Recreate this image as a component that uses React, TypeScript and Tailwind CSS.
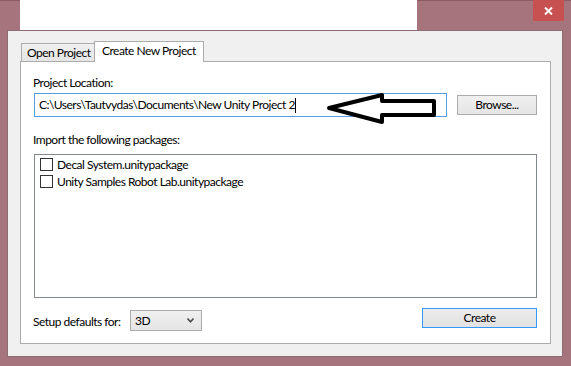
export default function App() {
  return (
    <div className="w-[571px] h-[366px] bg-[#a6747c] flex flex-col overflow-hidden whitespace-nowrap font-['Segoe_UI','Lato',sans-serif] text-[12px] tracking-[-0.5px] text-black">
      {/* Title bar */}
      <div className="h-[30px] shrink-0 flex">
        <div className="w-[20px] border-t border-[#8a5c65]" />
        <div className="w-[397px] bg-white" />
        <div className="flex-1 border-t border-[#8a5c65]" />
        <div className="w-[31px] h-[21px] bg-[#c75050] flex items-center justify-center">
          <svg width="9" height="8" viewBox="0 0 9 8">
            <path d="M1 0.5 L8 7.5 M8 0.5 L1 7.5" stroke="white" strokeWidth="2" />
          </svg>
        </div>
        <div className="w-[7px] border-t border-[#8a5c65]" />
      </div>

      {/* Client area */}
      <div className="ml-[7px] mr-[8px] mb-[9px] flex-1 bg-[#f0f0f0] border border-[#8c6b72] pl-[12px] pr-[11px] pt-[10px] pb-[12px] flex flex-col">
        {/* Tabs */}
        <div className="h-[20px] flex items-end shrink-0">
          <div className="ml-[1px] w-[74px] h-[18px] border border-b-0 border-[#acacac] bg-gradient-to-b from-[#f0f0f0] to-[#e5e5e5] pl-[5px] leading-[17px]">
            Open Project
          </div>
          <div className="relative z-10 -mb-[1px] ml-[-1px] w-[110px] h-[21px] border border-b-0 border-[#acacac] bg-white pl-[7px] leading-[18px] self-start">
            Create New Project
          </div>
        </div>

        {/* Tab panel */}
        <div className="flex-1 border border-[#acacac] bg-white pl-[12px] pr-[13px] flex flex-col">
          <div className="mt-[13px] leading-[16px]">Project Location:</div>

          <div className="mt-[2px] h-[24px] flex items-center">
            <div className="relative ml-[1px] w-[413px] h-[24px] border border-[#569de5] bg-white flex items-center pl-[4px]">
              <span className="leading-[16px]">C:\Users\Tautvydas\Documents\New Unity Project 2</span>
              <span className="w-px h-[15px] bg-black" />
              <svg
                className="absolute left-[292px] top-[-2px] overflow-visible"
                width="112"
                height="32"
                viewBox="0 0 112 32"
              >
                <path
                  d="M2 16 L55 3 L55 9 L107 9 L107 23 L55 23 L55 30 Z"
                  fill="white"
                  stroke="black"
                  strokeWidth="4"
                  strokeLinejoin="round"
                />
              </svg>
            </div>
            <button className="ml-[10px] w-[80px] h-[20px] border border-[#acacac] bg-gradient-to-b from-[#f0f0f0] to-[#e5e5e5] leading-[16px]">
              Browse...
            </button>
          </div>

          <div className="mt-[15px] leading-[16px]">Import the following packages:</div>

          <div className="mt-[6px] ml-[1px] w-[503px] h-[144px] border border-[#828790] bg-white pt-[1px] pl-[5px] flex flex-col">
            {["Decal System.unitypackage", "Unity Samples Robot Lab.unitypackage"].map((name) => (
              <div key={name} className="h-[17px] flex items-center">
                <span className="w-[13px] h-[13px] border border-[#333333] bg-white shrink-0" />
                <span className="ml-[4px] leading-[16px]">{name}</span>
              </div>
            ))}
          </div>

          <div className="mt-[10px] flex justify-between items-start">
            <div className="mt-[2px] flex items-center">
              <div className="w-[97px] leading-[16px] mt-[3px]">Setup defaults for:</div>
              <div className="w-[72px] h-[21px] border border-[#acacac] bg-gradient-to-b from-[#f0f0f0] to-[#e5e5e5] flex items-center justify-between pl-[4px] pr-[7px]">
                <span className="leading-[16px]">3D</span>
                <svg width="7" height="5" viewBox="0 0 7 5">
                  <path d="M0.5 0.5 L3.5 3.8 L6.5 0.5" fill="none" stroke="#4d4d4d" strokeWidth="1.6" />
                </svg>
              </div>
            </div>
            <button className="w-[115px] h-[20px] border border-[#3399ff] bg-gradient-to-b from-[#ececec] to-[#e2e2e2] leading-[16px]">
              Create
            </button>
          </div>
        </div>
      </div>
    </div>
  );
}
